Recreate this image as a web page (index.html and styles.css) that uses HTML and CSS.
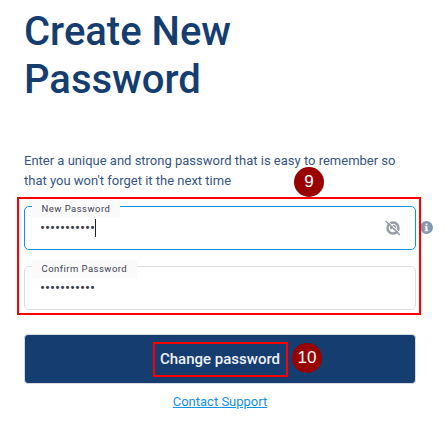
FILE: index.html
```html
<!DOCTYPE html>
<html lang="en">
<head>
  <meta charset="UTF-8" />
  <meta name="viewport" content="width=device-width, initial-scale=1.0"/>
  <title>Create New Password</title>
  <link rel="stylesheet" href="styles.css">
</head>
<body>
  <div class="reset-container">
    <h1>Create New Password</h1>
    <p class="intro">Enter a unique and strong password that is easy to remember so that you won't forget it the next time</p>

    <form class="reset-form">
      <div class="field active">
        <label>New Password</label>
        <div class="value"><span class="dots">•••••••••••</span><span class="caret"></span></div>
        <svg class="eye" width="16" height="16" viewBox="0 0 16 16" fill="none" stroke="#939ca5">
          <circle cx="8" cy="8" r="5.5" stroke-width="2.4"/>
          <path d="M6.2 9a2.2 2.2 0 1 1 3.6.6" stroke-width="1.9"/>
          <path d="M2 .2l13.8 13.8" stroke="#fff" stroke-width="1"/>
          <path d="M.7 .9l14.2 14.2" stroke-width="1.4"/>
        </svg>
        <svg class="info" width="13" height="13" viewBox="0 0 13 13">
          <circle cx="6.5" cy="6.5" r="6.5" fill="#8399b0"/>
          <path d="M5.5 2.5h2v1.7h-2zM4.7 5.2h2.8v3.9h.8v1.2H4.7V9.1h.8V6.4h-.8z" fill="#fff"/>
        </svg>
      </div>
      <div class="field">
        <label>Confirm Password</label>
        <div class="value"><span class="dots">•••••••••••</span></div>
      </div>
      <div class="outline"></div>
      <span class="badge badge-fields">9</span>
    </form>

    <button type="button" class="submit">
      <span class="submit-text">Change password</span>
      <span class="badge badge-submit">10</span>
    </button>
    <a href="#" class="support">Contact Support</a>
  </div>
</body>
</html>
```
FILE: styles.css
```css
* {
  box-sizing: border-box;
}

body {
  margin: 0;
  background: #fff;
  font-family: Roboto, sans-serif;
  color: #153d6f;
  overflow: hidden;
}

.reset-container {
  display: flex;
  flex-direction: column;
  width: 392px;
  margin-left: 24px;
  padding-top: 8px;
}

h1 {
  width: 260px;
  margin: 0 0 47px;
  font-size: 40px;
  font-weight: 500;
  line-height: 48px;
}

.intro {
  margin: 0 0 15px;
  font-size: 13px;
  line-height: 20px;
  color: #36557f;
}

.reset-form {
  position: relative;
  display: flex;
  flex-direction: column;
  gap: 16px;
  margin-bottom: 24px;
}

.field {
  position: relative;
  height: 44px;
  padding: 12px 15px;
  border: 1px solid #ddd;
  border-radius: 5px;
}

.field.active {
  border-color: #1490e4;
}

.field label {
  position: absolute;
  left: 7px;
  top: -7px;
  height: 18px;
  padding: 0 10px 0 9.5px;
  background: #fafafa;
  font-size: 9.5px;
  letter-spacing: 0.46px;
  line-height: 18px;
  color: #3f4252;
  white-space: nowrap;
}

.value {
  display: flex;
  align-items: center;
  height: 18px;
}

.dots {
  font-size: 15px;
  letter-spacing: -0.06px;
  line-height: 18px;
  color: #3c4048;
}

.caret {
  width: 1px;
  height: 18px;
  background: #222;
}

.eye {
  position: absolute;
  left: 360px;
  top: 13px;
}

.info {
  position: absolute;
  left: 395px;
  top: 14px;
}

/* red guide frames and step numbers */
.outline {
  position: absolute;
  left: -7px;
  top: -9px;
  width: 404px;
  height: 118px;
  border: 2px solid #f00;
}

.badge {
  position: absolute;
  display: flex;
  align-items: center;
  justify-content: center;
  width: 30px;
  height: 30px;
  border-radius: 50%;
  background: #900;
  color: #fff;
  font-family: "Liberation Sans", Arial, sans-serif;
  font-size: 17px;
  font-weight: 400;
  line-height: 14px;
}

.badge-fields {
  left: 270px;
  top: -39px;
}

.badge-submit {
  left: 267px;
  top: 8px;
}

.submit {
  position: relative;
  display: flex;
  align-items: center;
  height: 50px;
  padding: 0 0 0 128px;
  border: 1px solid #d5dae0;
  border-radius: 4px;
  background: #153d6f;
  font-family: inherit;
}

.submit-text {
  width: 135px;
  height: 35px;
  padding-right: 1px;
  border: 2px solid #f00;
  font-size: 15px;
  font-weight: 500;
  line-height: 31px;
  color: #eef2f7;
  text-align: center;
}

.support {
  align-self: center;
  margin-top: 8px;
  font-size: 13px;
  line-height: 20px;
  color: #1490e4;
}
```
